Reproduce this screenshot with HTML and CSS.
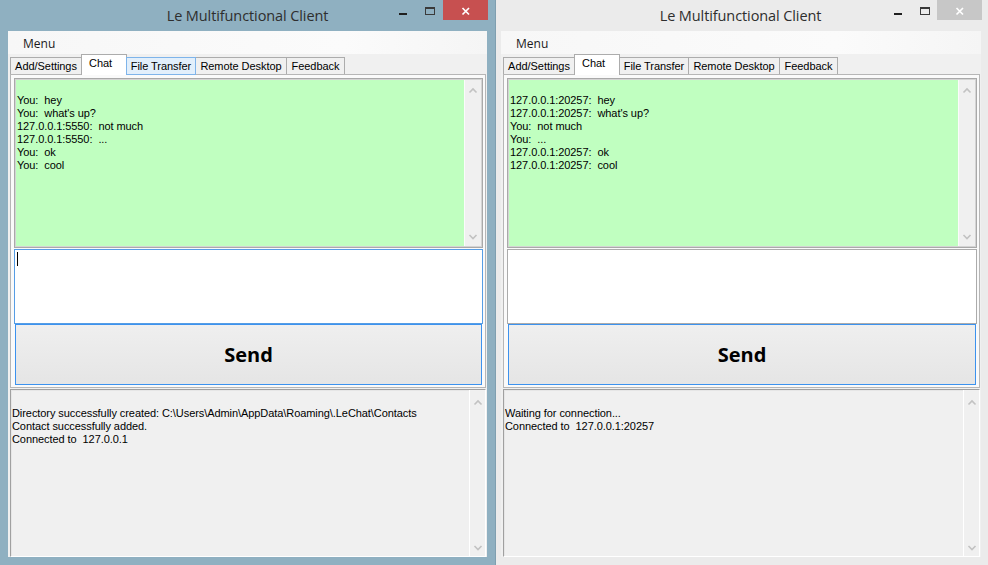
FILE: index.html
```html
<!DOCTYPE html>
<html>
<head>
<meta charset="utf-8">
<link rel="stylesheet" href="styles.css">
</head>
<body>
<div class="desktop">
  <div class="window win-right">
    <div class="titlebar">
      <div class="title">Le Multifunctional Client</div>
      <div class="caption">
        <svg class="cap-min" width="27" height="20" viewBox="0 0 27 20"><rect x="10" y="13" width="8" height="2" fill="#1f1f1f"/></svg>
        <svg class="cap-max" width="26" height="20" viewBox="0 0 26 20"><rect x="9.5" y="7.5" width="9" height="7" fill="none" stroke="#3a3a3a"/><line x1="9.5" y1="8.5" x2="18.5" y2="8.5" stroke="#3a3a3a"/></svg>
        <svg class="cap-close" width="45" height="20" viewBox="0 0 45 20"><rect width="45" height="20" fill="#c7c7c7"/><path d="M19.5 8 L26 14.5 M26 8 L19.5 14.5" stroke="#fff" stroke-width="1.7"/></svg>
      </div>
    </div>
    <div class="client">
      <div class="menubar"><span class="menu-item">Menu</span></div>
      <div class="tabstrip">
        <div class="tab tab-add">Add/Settings</div>
        <div class="tab tab-chat selected">Chat</div>
        <div class="tab tab-ft">File Transfer</div>
        <div class="tab tab-rd">Remote Desktop</div>
        <div class="tab tab-fb">Feedback</div>
      </div>
      <div class="tabpage">
        <div class="chatbox">
          <div class="chattext">127.0.0.1:20257:  hey
127.0.0.1:20257:  what's up?
You:  not much
You:  ...
127.0.0.1:20257:  ok
127.0.0.1:20257:  cool</div>
          <div class="vscroll">
            <svg width="16" height="12" viewBox="0 0 16 12"><path d="M4.5 8.5 L8 5 L11.5 8.5" fill="none" stroke="#c2c2c2" stroke-width="1.6"/></svg>
            <svg width="16" height="12" viewBox="0 0 16 12"><path d="M4.5 4 L8 7.5 L11.5 4" fill="none" stroke="#c2c2c2" stroke-width="1.6"/></svg>
          </div>
        </div>
        <div class="input"></div>
        <div class="send">Send</div>
      </div>
      <div class="log">
        <div class="logtext">Waiting for connection...
Connected to  127.0.0.1:20257</div>
        <div class="vscroll log-scroll">
          <svg width="16" height="12" viewBox="0 0 16 12"><path d="M4.5 8.5 L8 5 L11.5 8.5" fill="none" stroke="#c2c2c2" stroke-width="1.6"/></svg>
          <svg width="16" height="12" viewBox="0 0 16 12"><path d="M4.5 4 L8 7.5 L11.5 4" fill="none" stroke="#c2c2c2" stroke-width="1.6"/></svg>
        </div>
      </div>
    </div>
  </div>

  <div class="window win-left">
    <div class="titlebar">
      <div class="title">Le Multifunctional Client</div>
      <div class="caption">
        <svg class="cap-min" width="27" height="20" viewBox="0 0 27 20"><rect x="9" y="13" width="8" height="2" fill="#1f1f1f"/></svg>
        <svg class="cap-max" width="26" height="20" viewBox="0 0 26 20"><rect x="8.5" y="7.5" width="9" height="7" fill="none" stroke="#3a3a3a"/><line x1="8.5" y1="8.5" x2="17.5" y2="8.5" stroke="#3a3a3a"/></svg>
        <svg class="cap-close" width="45" height="20" viewBox="0 0 45 20"><rect width="45" height="20" fill="#c75050"/><path d="M19.5 8 L26 14.5 M26 8 L19.5 14.5" stroke="#fff" stroke-width="1.7"/></svg>
      </div>
    </div>
    <div class="client">
      <div class="menubar"><span class="menu-item">Menu</span></div>
      <div class="tabstrip">
        <div class="tab tab-add">Add/Settings</div>
        <div class="tab tab-chat selected">Chat</div>
        <div class="tab tab-ft hover">File Transfer</div>
        <div class="tab tab-rd">Remote Desktop</div>
        <div class="tab tab-fb">Feedback</div>
      </div>
      <div class="tabpage">
        <div class="chatbox">
          <div class="chattext">You:  hey
You:  what's up?
127.0.0.1:5550:  not much
127.0.0.1:5550:  ...
You:  ok
You:  cool</div>
          <div class="vscroll">
            <svg width="16" height="12" viewBox="0 0 16 12"><path d="M4.5 8.5 L8 5 L11.5 8.5" fill="none" stroke="#c2c2c2" stroke-width="1.6"/></svg>
            <svg width="16" height="12" viewBox="0 0 16 12"><path d="M4.5 4 L8 7.5 L11.5 4" fill="none" stroke="#c2c2c2" stroke-width="1.6"/></svg>
          </div>
        </div>
        <div class="input focused"><span class="caret"></span></div>
        <div class="send">Send</div>
      </div>
      <div class="log">
        <div class="logtext">Directory successfully created: C:\Users\Admin\AppData\Roaming\.LeChat\Contacts
Contact successfully added.
Connected to  127.0.0.1</div>
        <div class="vscroll log-scroll">
          <svg width="16" height="12" viewBox="0 0 16 12"><path d="M4.5 8.5 L8 5 L11.5 8.5" fill="none" stroke="#c2c2c2" stroke-width="1.6"/></svg>
          <svg width="16" height="12" viewBox="0 0 16 12"><path d="M4.5 4 L8 7.5 L11.5 4" fill="none" stroke="#c2c2c2" stroke-width="1.6"/></svg>
        </div>
      </div>
    </div>
  </div>
</div>
</body>
</html>
```
FILE: styles.css
```css
* { box-sizing: border-box; }
html, body { margin: 0; padding: 0; }
body {
  width: 988px;
  height: 565px;
  overflow: hidden;
  background: #ececec;
  font-family: "Liberation Sans", Arial, sans-serif;
}
.desktop {
  position: relative;
  width: 988px;
  height: 565px;
  overflow: hidden;
}
.window {
  position: absolute;
  top: 0;
  width: 496px;
  height: 565px;
  display: flex;
  flex-direction: column;
}
.win-left {
  left: 0;
  z-index: 2;
  background: #8fb0c1;
  border-right: 1px solid #7f9fb0;
}
.win-right {
  left: 492px;
  z-index: 1;
  background: #ebebeb;
  border-left: 1px solid #c8c8c8;
}
.titlebar {
  height: 31px;
  flex: none;
  display: grid;
  grid-template-columns: 1fr auto 1fr;
  align-items: start;
}
.title {
  grid-column: 2;
  padding-top: 6px;
  font-family: "Open Sans", "Noto Sans", sans-serif;
  font-size: 14.5px;
  color: #2e2e2e;
  letter-spacing: -0.1px;
  white-space: nowrap;
}
.caption {
  grid-column: 3;
  justify-self: end;
  display: flex;
  padding-right: 7px;
}
.caption svg { display: block; }
.win-right .caption { padding-right: 6px; }
.client {
  margin: 0 8px;
  height: 526px;
  background: #f0f0f0;
  display: flex;
  flex-direction: column;
}
.win-right .client { margin: 0 7px 0 8px; }
.menubar {
  height: 23px;
  flex: none;
  background: linear-gradient(to right, #f7f7f7, #fbfbfb 70%, #f5f5f5);
  display: flex;
  align-items: center;
  padding: 2px 0 0 15px;
  font-family: "Open Sans", "Noto Sans", sans-serif;
  font-size: 12px;
  color: #1a1a1a;
}
.tabstrip {
  height: 20px;
  flex: none;
  display: flex;
  align-items: flex-end;
  padding-left: 2px;
  font-size: 11px;
  color: #000;
  letter-spacing: -0.05px;
}
.tab {
  height: 17px;
  border: 1px solid #acacac;
  border-bottom: none;
  background: #f0f0f0;
  margin-left: -1px;
  text-align: center;
  line-height: 16px;
  white-space: nowrap;
}
.tab:first-child { margin-left: 0; }
.tab.selected {
  height: 21px;
  margin-bottom: -1px;
  background: #fff;
  position: relative;
  z-index: 1;
  line-height: 16px;
  text-align: left;
  padding-left: 7px;
}
.tab.hover {
  background: #e2effb;
  border-color: #7eb4ea;
  border-bottom: 1px solid #7eb4ea;
  position: relative;
  z-index: 1;
  height: 18px;
  margin-bottom: -1px;
}
.tab-add { width: 72px; }
.tab-chat { width: 46px; }
.tab-ft { width: 70px; }
.tab-rd { width: 92px; }
.tab-fb { width: 59px; }
.tabpage {
  height: 314px;
  flex: none;
  margin: 0 1px 0 2px;
  border: 1px solid #b6b6b6;
  background: #fafafa;
  padding: 3px 2px 2px 3px;
  display: flex;
  flex-direction: column;
}
.chatbox {
  height: 170px;
  flex: none;
  border: 1px solid #a9a9a9;
  box-shadow: inset 0 0 0 1px #d4d4d4;
  padding: 1px;
  display: flex;
}
.chattext {
  flex: 1;
  background: #c0ffc0;
  padding: 14px 0 0 1px;
  font-size: 11px;
  line-height: 13px;
  letter-spacing: -0.07px;
  white-space: pre;
  color: #000;
}
.vscroll {
  width: 17px;
  flex: none;
  background: #f0f0f0;
  border-left: 1px solid #fbfbfb;
  display: flex;
  flex-direction: column;
  justify-content: space-between;
  padding: 4px 0 3px;
}
.vscroll svg { display: block; }
.input {
  height: 75px;
  flex: none;
  margin-top: 1px;
  background: #fff;
  border: 1px solid #ababab;
  padding: 2px 0 0 2px;
}
.input.focused { border-color: #569de5; }
.caret {
  display: block;
  width: 1px;
  height: 14px;
  background: #000;
}
.send {
  height: 61px;
  flex: none;
  margin: 0 1px;
  border: 1px solid #3c92ee;
  background: linear-gradient(#efefef, #e5e5e5);
  display: flex;
  align-items: center;
  justify-content: center;
  padding-bottom: 1px;
  font-family: "Open Sans", "Noto Sans", sans-serif;
  font-weight: 700;
  font-size: 20px;
  color: #000;
}
.log {
  height: 168px;
  flex: none;
  margin: 1px 1px 0 2px;
  border: 1px solid;
  border-color: #a0a0a0 #ffffff #ffffff #a0a0a0;
  box-shadow: inset 1px 1px 0 #e6e6e6;
  background: #f0f0f0;
  display: flex;
}
.logtext {
  flex: 1;
  padding: 17px 0 0 1px;
  font-size: 11px;
  line-height: 13px;
  letter-spacing: -0.07px;
  white-space: pre;
  color: #000;
}
.log-scroll {
  width: 16px;
  border-left: 1px solid #ffffff;
  padding: 6px 0 2px;
}
```
